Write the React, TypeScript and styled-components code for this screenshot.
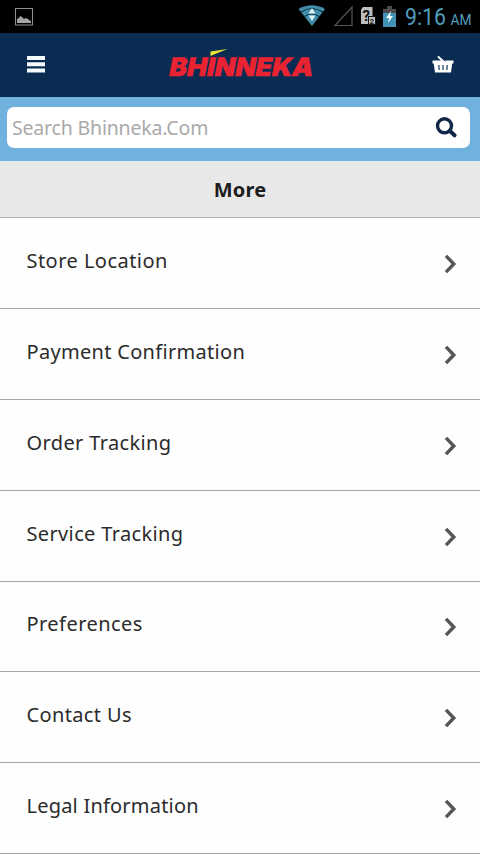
import React from "react";
import styled, { createGlobalStyle } from "styled-components";

const Global = createGlobalStyle`
  * { box-sizing: border-box; }
  body { margin: 0; background: #fefefe; }
`;

const Screen = styled.div`
  width: 480px;
  height: 854px;
  overflow: hidden;
  display: flex;
  flex-direction: column;
  background: #fefefe;
  color: #2b2b2b;
  font-family: "Noto Sans", sans-serif;
`;

const StatusBar = styled.div`
  height: 33px;
  flex: none;
  display: flex;
  justify-content: space-between;
  background: #000;
`;

const Header = styled.header`
  height: 64px;
  flex: none;
  display: flex;
  align-items: center;
  justify-content: space-between;
  padding: 0 26px 0 27px;
  background: #0a2b52;
`;

const HeaderButton = styled.button`
  display: flex;
  padding: 0 0 2px;
  border: 0;
  background: none;
`;

const SearchBar = styled.div`
  height: 64px;
  flex: none;
  padding: 10px 10px 13px 7px;
  background: #6fb2de;
`;

const SearchField = styled.label`
  height: 41px;
  display: flex;
  align-items: center;
  justify-content: space-between;
  padding: 0 13px 0 5px;
  border-radius: 7px;
  background: #fff;
`;

const Placeholder = styled.span`
  font-size: 19.5px;
  line-height: 28px;
  letter-spacing: -0.18px;
  color: #a9a9a9;
`;

const Title = styled.h1`
  height: 57.4px;
  flex: none;
  display: flex;
  align-items: center;
  justify-content: center;
  margin: 0;
  padding-bottom: 2px;
  border-top: 2px solid #e3eaf0;
  border-bottom: 1px solid #b4b4b4;
  background: #e8e8e8;
  color: #1c1c1c;
  font-size: 20px;
  font-weight: 700;
  letter-spacing: 0.2px;
`;

const List = styled.ul`
  margin: 0;
  padding: 0;
  list-style: none;
`;

const Row = styled.li`
  height: 90.8px;
  display: flex;
  align-items: center;
  justify-content: space-between;
  padding: 2px 23px 0 26.5px;
  border-bottom: 1px solid #a5a5a5;
`;

const Label = styled.span<{ $spacing: number }>`
  padding-bottom: 6px;
  font-size: 20px;
  line-height: 28px;
  white-space: nowrap;
  letter-spacing: ${(p) => p.$spacing}px;
`;

const items = [
  { label: "Store Location", spacing: 0.46 },
  { label: "Payment Confirmation", spacing: 0.31 },
  { label: "Order Tracking", spacing: 0.37 },
  { label: "Service Tracking", spacing: 0.36 },
  { label: "Preferences", spacing: 0.45 },
  { label: "Contact Us", spacing: 0.36 },
  { label: "Legal Information", spacing: 0.21 },
];

const PictureIcon = () => (
  <svg width="40" height="33">
    <rect x="15.5" y="8.5" width="17" height="16.5" fill="none" stroke="#8e8e8e" />
    <path d="M17 23v-4l2-1 1-2 2 1 2 2 2-1 2 1 1 1 2 1v2z" fill="#a4a4a4" />
  </svg>
);

const StatusIcons = () => (
  <svg width="190" height="33">
    <path d="M8.500 9Q22 1.500 35 9L22 26Z" fill="#438eab" />
    <path d="M11 12Q22 5 33 12M14.500 16.500Q22 11.500 29 16.500" fill="none" stroke="#0b3040" strokeWidth="1.200" />
    <path d="M22 8l3.500 5.500h-7zM18.500 15.500h7L22 21z" fill="#d9f2f7" />
    <path d="M45 25.500L62 7v18.500z" fill="none" stroke="#555" strokeWidth="1.200" />
    <path d="M73 7h9.500v17H71V9.500z" fill="#bdbdbd" />
    <text x="72.500" y="20.500" fontFamily="Roboto, sans-serif" fontSize="15" fontWeight="700" fill="#111">?</text>
    <rect x="78.500" y="16.500" width="7" height="8" fill="#bdbdbd" stroke="#111" />
    <text x="79.500" y="24" fontFamily="Roboto, sans-serif" fontSize="8" fontWeight="700" fill="#222">2</text>
    <path d="M97 6h5v3h4v5H93V9h4z" fill="#4b4b4b" />
    <path d="M93 13h13v14H93z" fill="#3e93b6" />
    <path d="M101 11l-5 7h3l-1 5 5-7h-3z" fill="#f3fcff" />
    <text x="115" y="25" fontFamily="Roboto, sans-serif" fontSize="23.500" textLength="41" lengthAdjust="spacingAndGlyphs" fill="#509dbb">9:16</text>
    <text x="160.500" y="25" fontFamily="Roboto, sans-serif" fontSize="14.500" textLength="21" lengthAdjust="spacingAndGlyphs" fill="#509dbb">AM</text>
  </svg>
);

const MenuIcon = () => (
  <svg width="18" height="17">
    <path d="M0 0h18v4H0zM0 6.200h18v4H0zM0 12.500h18v4H0z" fill="#f5faff" />
  </svg>
);

const Logo = () => (
  <svg width="156" height="40" viewBox="161 45 156 40">
    <text x="0" y="0" transform="translate(168 76) skewX(-11)" fontFamily="Inter, sans-serif" fontWeight="900" fontSize="25.500" textLength="144" lengthAdjust="spacingAndGlyphs" fill="#e92332" stroke="#e92332" strokeWidth="0.500">BHINNEKA</text>
    <path d="M210.500 51.500l17-2.500-11 4.500-6 2.500z" fill="#e8e337" />
  </svg>
);

const BasketIcon = () => (
  <svg width="22" height="18" viewBox="432 55 22 18">
    <path d="M432.500 60.500h21v3h-1.300L451 72.500h-16l-1.300-9h-1.200z" fill="#fff" />
    <path d="M438.500 57l6 5.500" stroke="#fff" strokeWidth="2" strokeLinecap="round" />
    <path d="M442.500 58.500l3 2.800" stroke="#0a2b52" strokeWidth="0.900" />
    <path d="M438.800 65l.4 5M443 65v5M447.200 65l-.4 5" stroke="#24446a" strokeWidth="1.300" />
  </svg>
);

const SearchIcon = () => (
  <svg width="22" height="21" viewBox="435 117 22 21">
    <circle cx="444.500" cy="125.800" r="7" fill="none" stroke="#10294a" strokeWidth="3.400" />
    <path d="M450 131l4.500 4.300" stroke="#10294a" strokeWidth="4" strokeLinecap="round" />
  </svg>
);

const Chevron = () => (
  <svg width="13" height="20">
    <path d="M2 1.800l7.800 8.200L2 18.200" fill="none" stroke="#555" strokeWidth="3.400" />
  </svg>
);

export default function App() {
  return (
    <Screen>
      <Global />
      <StatusBar>
        <PictureIcon />
        <StatusIcons />
      </StatusBar>
      <Header>
        <HeaderButton aria-label="Menu"><MenuIcon /></HeaderButton>
        <Logo />
        <HeaderButton aria-label="Basket"><BasketIcon /></HeaderButton>
      </Header>
      <SearchBar>
        <SearchField>
          <Placeholder>Search Bhinneka.Com</Placeholder>
          <SearchIcon />
        </SearchField>
      </SearchBar>
      <Title>More</Title>
      <List>
        {items.map((item) => (
          <Row key={item.label}>
            <Label $spacing={item.spacing}>{item.label}</Label>
            <Chevron />
          </Row>
        ))}
      </List>
    </Screen>
  );
}
